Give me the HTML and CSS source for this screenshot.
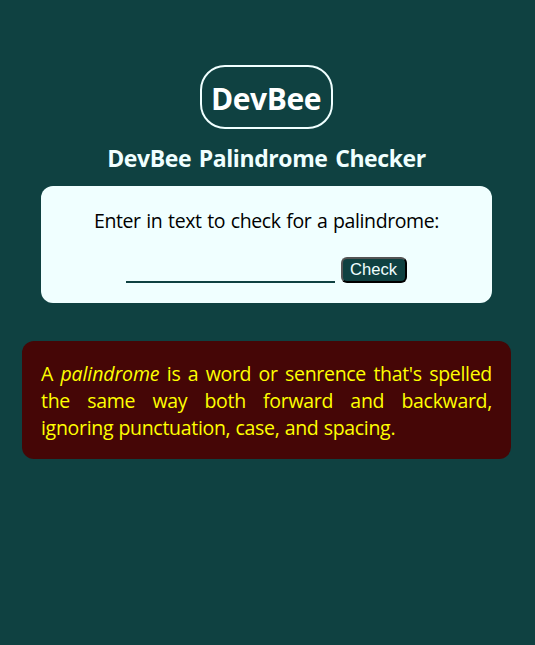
FILE: index.html
```html
<!DOCTYPE html>
<html lang="en">
<head>
<meta charset="utf-8">
<title>DevBee Palindrome Checker</title>
<link rel="stylesheet" href="styles.css">
</head>
<body>
<main class="page">
  <div class="logo">DevBee</div>
  <h1 class="title">DevBee Palindrome Checker</h1>
  <section class="checker">
    <label class="prompt" for="text-input">Enter in text to check for a palindrome:</label>
    <div class="row">
      <input class="text-input" id="text-input" type="text">
      <button class="check" type="button">Check</button>
    </div>
  </section>
  <section class="about">
    <p class="about-text">A <em class="term">palindrome</em> is a word or senrence that's spelled the same way both forward and backward, ignoring punctuation, case, and spacing.</p>
  </section>
</main>
</body>
</html>
```
FILE: styles.css
```css
* { box-sizing: border-box; }
body {
  margin: 0;
  min-height: 645px;
  background: #0f4141;
  font-family: "Segoe UI", "Open Sans", sans-serif;
  font-size: 20px;
}
.page {
  display: flex;
  flex-direction: column;
  align-items: center;
  width: 533px;
  padding-top: 65px;
}
.logo {
  width: 133px;
  height: 64px;
  margin-right: 1px;
  border: 2px solid #f0ffff;
  border-radius: 25px;
  color: #fff;
  font-size: 30px;
  font-weight: 700;
  line-height: 63px;
  letter-spacing: -0.4px;
  text-align: center;
  white-space: nowrap;
}
.title {
  margin: 13px 0 12px;
  color: #f0ffff;
  font-size: 23px;
  font-weight: 700;
  line-height: 32px;
  letter-spacing: -0.4px;
  word-spacing: 2px;
  white-space: nowrap;
}
.checker {
  display: flex;
  flex-direction: column;
  align-items: center;
  width: 451px;
  height: 117px;
  padding-top: 21px;
  border-radius: 12px;
  background: #f0ffff;
}
.prompt {
  color: #000;
  font-size: 19.5px;
  line-height: 27px;
  letter-spacing: -0.4px;
  word-spacing: 1px;
  white-space: nowrap;
}
.row {
  display: flex;
  gap: 6px;
  margin-top: 23px;
}
.text-input {
  width: 209px;
  height: 26px;
  padding: 0;
  border: 0;
  border-bottom: 2px solid #0f4141;
  background: transparent;
  outline: 0;
}
.check {
  width: 66px;
  height: 26px;
  padding: 0 1px 1px 0;
  border: 2px outset #000;
  border-radius: 6px;
  background: #0f4141;
  color: #f0ffff;
  font: 16.6px/21px "Liberation Sans", sans-serif;
}
.about {
  width: 489px;
  height: 118px;
  margin-top: 38px;
  padding: 19px 19px 0;
  border-radius: 12px;
  background: #450606;
  color: #ff0;
}
.about-text {
  margin: 0;
  font-size: 19.5px;
  line-height: 27px;
  letter-spacing: -0.3px;
  word-spacing: 0.4px;
  text-align: justify;
}
.term { letter-spacing: -0.1px; }
```
